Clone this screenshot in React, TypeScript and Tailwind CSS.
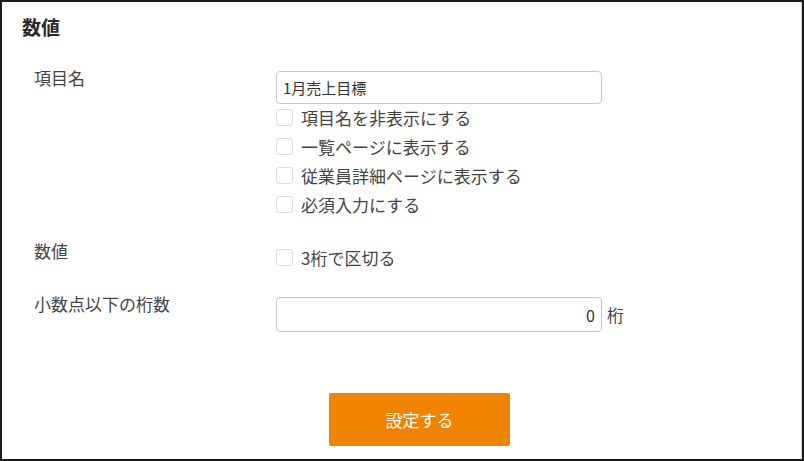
import { useState } from "react";

const FONT = "font-['Meiryo','Noto_Sans_CJK_JP','Noto_Sans',sans-serif]";

function Check({ label }: { label: string }) {
  const [on, setOn] = useState(false);
  return (
    <label className="flex h-[29px] items-center gap-[8px] cursor-pointer">
      <input
        type="checkbox"
        checked={on}
        onChange={() => setOn(!on)}
        className="peer sr-only"
      />
      <span className="h-[17px] w-[17px] shrink-0 rounded-[3px] border border-[#dcdcdc] bg-white peer-checked:bg-[#f08300]" />
      <span className="text-[17px] leading-none text-[#444]">{label}</span>
    </label>
  );
}

function Row({ label, children }: { label: string; children: React.ReactNode }) {
  return (
    <div className="grid grid-cols-[242px_1fr]">
      <div className="text-[17px] leading-[20px] text-[#444]">{label}</div>
      <div className="pt-[3px]">{children}</div>
    </div>
  );
}

export default function App() {
  const [name, setName] = useState("1月売上目標");
  const [digits, setDigits] = useState("0");

  return (
    <div className={`${FONT} h-[461px] w-[804px] border-2 border-[#1b1b1b] bg-white`}>
      <div className="flex h-full flex-col border-r border-[#d4d4d4] px-[20px] pt-[13px]">
        <h2 className="text-[19px] font-bold leading-[24px] text-[#2a2a2a]">数値</h2>

        <div className="mt-[29px] flex flex-col gap-[22px] pl-[12px]">
          <Row label="項目名">
            <input
              value={name}
              onChange={(e) => setName(e.target.value)}
              className="h-[33px] w-[326px] rounded-[4px] border border-[#c8c8c8] px-[6px] text-[15px] text-[#333] outline-none"
            />
            <div className="-mt-[1px]">
              <Check label="項目名を非表示にする" />
              <Check label="一覧ページに表示する" />
              <Check label="従業員詳細ページに表示する" />
              <Check label="必須入力にする" />
            </div>
          </Row>

          <Row label="数値">
            <div className="-mt-[1px]">
              <Check label="3桁で区切る" />
            </div>
          </Row>

          <Row label="小数点以下の桁数">
            <div className="flex items-center gap-[5px]">
              <input
                value={digits}
                onChange={(e) => setDigits(e.target.value)}
                className="h-[35px] w-[326px] rounded-[4px] border border-[#c8c8c8] px-[6px] text-right text-[16px] text-[#333] outline-none"
              />
              <span className="text-[17px] text-[#444]">桁</span>
            </div>
          </Row>
        </div>

        <div className="mt-[61px] flex justify-center pl-[36px]">
          <button className="h-[53px] w-[181px] rounded-[2px] bg-[#f08300] text-[17px] text-white">
            設定する
          </button>
        </div>
      </div>
    </div>
  );
}
